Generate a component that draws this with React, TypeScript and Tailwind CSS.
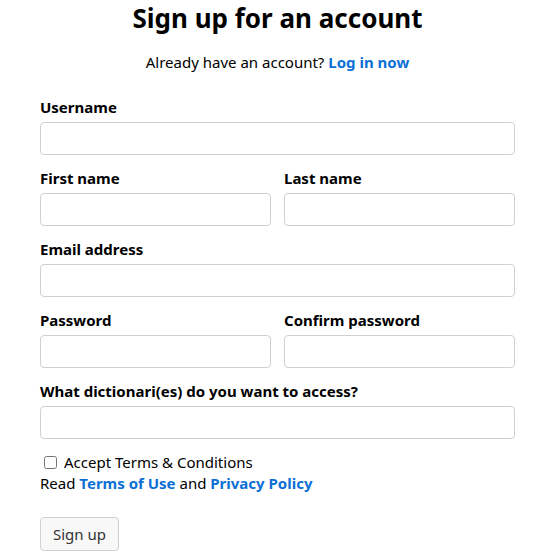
import React from "react";

const font = { fontFamily: '"Noto Sans", "Open Sans", sans-serif' };

function Field({ label, className = "" }: { label: string; className?: string }) {
  return (
    <div className={"flex flex-col " + className}>
      <label className="text-[15px] font-bold leading-5 text-black">{label}</label>
      <input type="text" className="mt-[5px] h-[33px] w-full rounded-[4px] border border-[#d0d0d0] bg-white px-3 outline-none" />
    </div>
  );
}

export default function App() {
  return (
    <div className="min-h-[560px] bg-white text-black" style={font}>
      <div className="pl-[40px] pr-[36px]">
        <h1 className="pt-[1px] text-center text-[26px] font-bold leading-[34px]">Sign up for an account</h1>
        <p className="mt-[17px] text-center text-[15px] leading-5">
          Already have an account?{" "}
          <a href="#" className="font-bold text-[#0b70d6]">Log in now</a>
        </p>

        <form className="mt-[25px] flex flex-col gap-[13px]">
          <Field label="Username" />
          <div className="grid grid-cols-2 gap-[13px]">
            <Field label="First name" />
            <Field label="Last name" />
          </div>
          <Field label="Email address" />
          <div className="grid grid-cols-2 gap-[13px]">
            <Field label="Password" />
            <Field label="Confirm password" />
          </div>
          <Field label="What dictionari(es) do you want to access?" />

          <div className="text-[15px] leading-[21px]">
            <label className="flex items-center gap-[7px] pl-[4px]">
              <input type="checkbox" className="h-[13px] w-[13px] rounded-[2px] border border-[#767676] accent-[#0b70d6]" />
              <span>Accept Terms &amp; Conditions</span>
            </label>
            <p>
              Read <a href="#" className="font-bold text-[#0b70d6]">Terms of Use</a> and{" "}
              <a href="#" className="font-bold text-[#0b70d6]">Privacy Policy</a>
            </p>
          </div>

          <div className="mt-[10px]">
            <button type="button" className="h-[34px] rounded-[4px] border border-[#d0d0d0] bg-[#f8f8f8] px-3 text-[15px] text-[#333]">
              Sign up
            </button>
          </div>
        </form>
      </div>
    </div>
  );
}
